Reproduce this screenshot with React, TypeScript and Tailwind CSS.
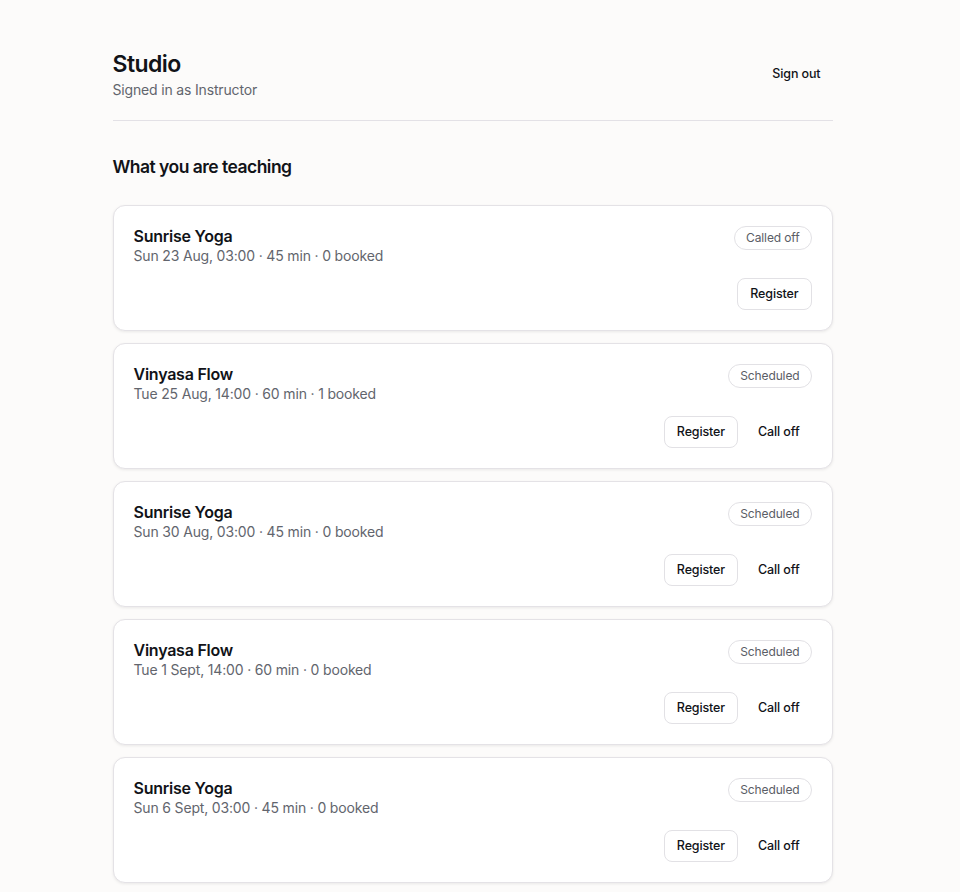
import React from "react";

type Session = {
    id: number;
    name: string;
    when: string;
    minutes: number;
    booked: number;
    status: "scheduled" | "called_off";
};

const sessions: Session[] = [
    { id: 1, name: "Sunrise Yoga", when: "Sun 23 Aug, 03:00", minutes: 45, booked: 0, status: "called_off" },
    { id: 2, name: "Vinyasa Flow", when: "Tue 25 Aug, 14:00", minutes: 60, booked: 1, status: "scheduled" },
    { id: 3, name: "Sunrise Yoga", when: "Sun 30 Aug, 03:00", minutes: 45, booked: 0, status: "scheduled" },
    { id: 4, name: "Vinyasa Flow", when: "Tue 1 Sept, 14:00", minutes: 60, booked: 0, status: "scheduled" },
    { id: 5, name: "Sunrise Yoga", when: "Sun 6 Sept, 03:00", minutes: 45, booked: 0, status: "scheduled" },
];

function SessionCard({ session }: { session: Session }) {
    const calledOff = session.status === "called_off";
    return (
        <div className="rounded-xl border border-[#e4e2e6] bg-white p-5 shadow-[0_1px_3px_rgba(0,0,0,0.08)]">
            <div className="flex items-start justify-between">
                <div>
                    <div className="text-base font-semibold leading-5 tracking-[-0.015em] text-[#111318]">
                        {session.name}
                    </div>
                    <div className="text-sm leading-5 tracking-[-0.012em] text-[#62656d]">
                        {session.when} · {session.minutes} min · {session.booked} booked
                    </div>
                </div>
                <span className="rounded-full border border-[#e2e1e5] px-[11px] py-[3px] text-xs leading-4 tracking-[-0.01em] text-[#5a5d66]">
                    {calledOff ? "Called off" : "Scheduled"}
                </span>
            </div>
            <div className="mt-3 flex justify-end gap-2">
                <button className="h-8 rounded-lg border border-[#e2e1e5] bg-white px-3 text-[12.5px] font-medium tracking-[-0.01em] text-[#111318]">
                    Register
                </button>
                {!calledOff && (
                    <button className="h-8 rounded-lg px-3 text-[12.5px] font-medium tracking-[-0.01em] text-[#111318]">
                        Call off
                    </button>
                )}
            </div>
        </div>
    );
}

export default function App() {
    return (
        <div className="min-h-screen bg-[#fcfbfa] pr-[15px] font-['Inter','Noto_Sans',sans-serif] antialiased">
            <main className="mx-auto max-w-[720px] py-12">
                <header className="flex items-center justify-between border-b border-[#e3e1e6] pb-5">
                    <div>
                        <h1 className="text-[23px] font-semibold leading-8 tracking-tight text-[#111318]">Studio</h1>
                        <p className="text-sm leading-5 tracking-[-0.012em] text-[#62656d]">Signed in as Instructor</p>
                    </div>
                    <button className="h-8 rounded-lg px-3 text-[12.5px] font-medium tracking-[-0.01em] text-[#111318]">
                        Sign out
                    </button>
                </header>

                <section className="mt-8">
                    <h2 className="text-[17.5px] font-semibold leading-7 tracking-[-0.03em] text-[#111318]">
                        What you are teaching
                    </h2>
                    <div className="mt-6 flex flex-col gap-3">
                        {sessions.map((s) => (
                            <SessionCard key={s.id} session={s} />
                        ))}
                    </div>
                </section>
            </main>
        </div>
    );
}
